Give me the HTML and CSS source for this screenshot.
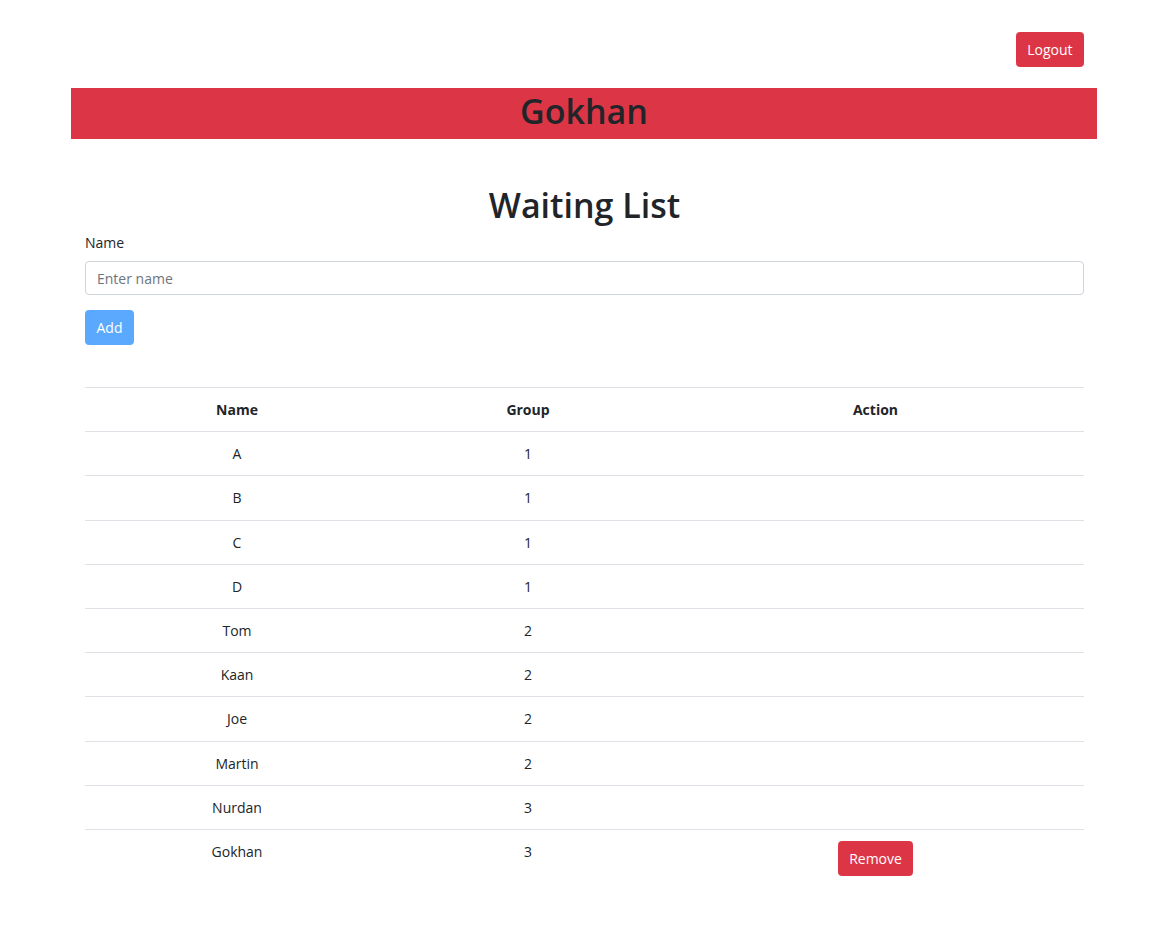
FILE: index.html
```html
<!DOCTYPE html>
<html>
<head>
<meta charset="utf-8">
<title>Waiting List</title>
<link rel="stylesheet" href="styles.css">
</head>
<body>
<div class="container">
  <div class="topbar">
    <button class="btn btn-danger">Logout</button>
  </div>
  <div class="banner">Gokhan</div>
  <div class="content">
    <h1 class="title">Waiting List</h1>
    <form class="form">
      <label class="label" for="name">Name</label>
      <input class="input" id="name" type="text" placeholder="Enter name">
      <button class="btn btn-primary" type="button" disabled>Add</button>
    </form>
    <table class="table">
      <thead>
        <tr><th class="c-name">Name</th><th class="c-group">Group</th><th class="c-action">Action</th></tr>
      </thead>
      <tbody>
        <tr><td>A</td><td>1</td><td></td></tr>
        <tr><td>B</td><td>1</td><td></td></tr>
        <tr><td>C</td><td>1</td><td></td></tr>
        <tr><td>D</td><td>1</td><td></td></tr>
        <tr><td>Tom</td><td>2</td><td></td></tr>
        <tr><td>Kaan</td><td>2</td><td></td></tr>
        <tr><td>Joe</td><td>2</td><td></td></tr>
        <tr><td>Martin</td><td>2</td><td></td></tr>
        <tr><td>Nurdan</td><td>3</td><td></td></tr>
        <tr><td>Gokhan</td><td>3</td><td><button class="btn btn-danger">Remove</button></td></tr>
      </tbody>
    </table>
  </div>
</div>
</body>
</html>
```

FILE: styles.css
```css
* { box-sizing: border-box; }
html, body { margin: 0; padding: 0; background: #fff; }
body {
  font-family: "Open Sans", "Noto Sans", sans-serif;
  font-size: 14px;
  line-height: 21px;
  color: #212529;
}
.container {
  width: 1026px;
  margin-left: 71px;
  padding-top: 32px;
}
.topbar {
  display: flex;
  justify-content: flex-end;
  padding: 0 13px;
  margin-bottom: 21px;
}
.btn {
  font-family: inherit;
  font-size: 14px;
  line-height: 21px;
  padding: 6px 10.5px;
  border: 1px solid transparent;
  border-radius: 3.5px;
  color: #fff;
  cursor: pointer;
}
.btn-danger { background: #dc3545; border-color: #dc3545; }
.btn-primary { background: #5aa9ff; border-color: #5aa9ff; }
.banner {
  background: #dc3545;
  height: 51px;
  text-align: center;
  font-size: 34px;
  font-weight: 600;
  line-height: 46px;
  color: #212529;
}
.content { padding: 0 13px 0 14px; }
.title {
  margin: 45px 0 6px;
  text-align: center;
  font-size: 34px;
  font-weight: 600;
  line-height: 42px;
}
.form { display: flex; flex-direction: column; align-items: flex-start; }
.label { margin-bottom: 8px; }
.input {
  width: 100%;
  height: 34px;
  padding: 6px 11px;
  font-family: inherit;
  font-size: 14px;
  border: 1px solid #ced4da;
  border-radius: 4px;
  color: #495057;
  margin-bottom: 15px;
}
.input::placeholder { color: #6c757d; }
.table {
  width: 100%;
  border-collapse: collapse;
  margin-top: 42px;
  table-layout: fixed;
}
.table th, .table td {
  text-align: center;
  vertical-align: top;
  padding: 11.1px 10px;
  border-top: 1px solid #dee2e6;
}
.table th { font-weight: 700; border-bottom: 1px solid #dee2e6; }
.c-name { width: 304px; }
.c-group { width: 278px; }
```
